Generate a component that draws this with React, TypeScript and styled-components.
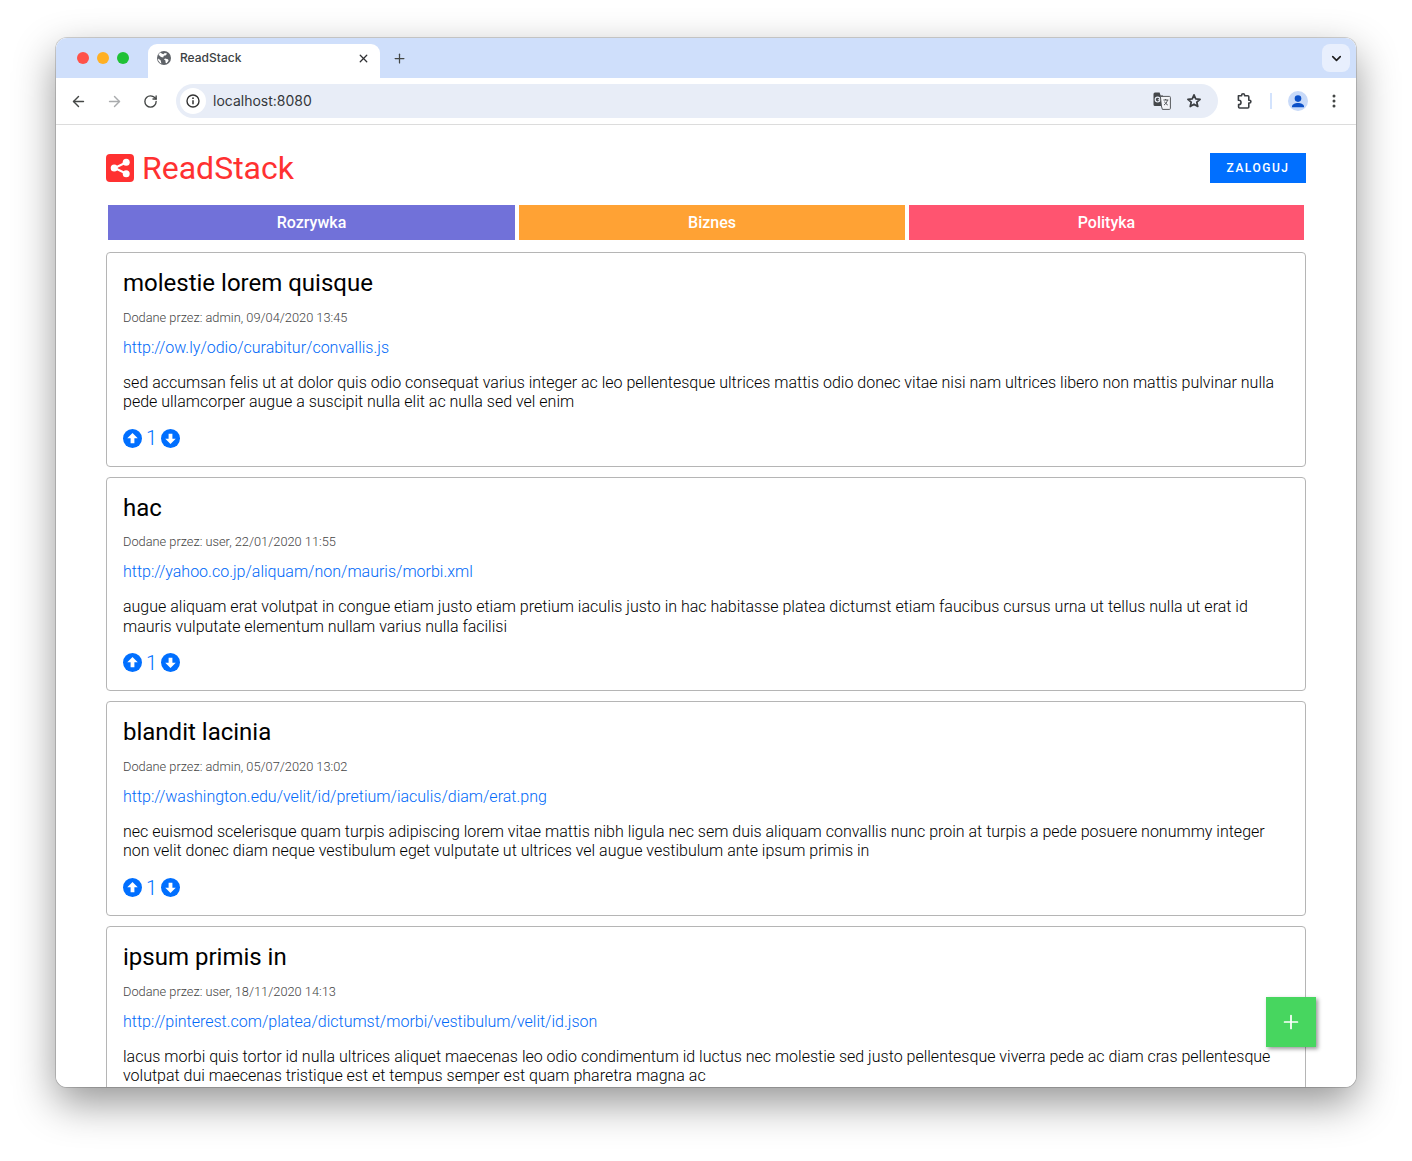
import React from 'react';
import styled, { createGlobalStyle } from 'styled-components';
import { ArrowLeft, ArrowRight, ChevronDown, Plus, RotateCw, X } from 'lucide-react';

const GlobalStyle = createGlobalStyle`
  html, body {
    margin: 0;
    padding: 0;
    background: #fff;
  }
  body {
    font-family: Roboto, "Liberation Sans", sans-serif;
  }
`;

const Page = styled.div`
  width: 1412px;
  height: 1161px;
  padding: 38px 56px 0;
  box-sizing: border-box;
  overflow: hidden;
`;

const Window = styled.div`
  position: relative;
  width: 1300px;
  height: 1049px;
  display: flex;
  flex-direction: column;
  border-radius: 11px;
  overflow: hidden;
  background: #fff;
`;

const WindowShadow = styled.div`
  border-radius: 11px;
  width: 1300px;
  height: 1049px;
  box-shadow: 0 0 0 1px rgba(0, 0, 0, 0.16), 0 16px 42px rgba(0, 0, 0, 0.42);
`;

const TabStrip = styled.div`
  height: 40px;
  flex: none;
  display: flex;
  align-items: flex-end;
  padding: 0 6px 0 92px;
  background: #cfdffb;
`;

const Lights = styled.div`
  position: absolute;
  left: 21px;
  top: 14px;
  display: flex;
  gap: 8px;
`;

const Light = styled.span<{ $color: string }>`
  width: 12px;
  height: 12px;
  border-radius: 50%;
  background: ${(p) => p.$color};
`;

const Tab = styled.div`
  width: 232px;
  height: 34px;
  box-sizing: border-box;
  display: flex;
  align-items: center;
  padding: 0 10px 6px 9px;
  background: #fff;
  border-radius: 9px 9px 0 0;
  font-family: Inter, Roboto, sans-serif;
  font-size: 12px;
  font-weight: 500;
  color: #3c3f43;
`;

const TabTitle = styled.span`
  flex: 1;
  margin-left: 9px;
  padding-bottom: 1px;
`;

const NewTab = styled.div`
  display: flex;
  align-items: center;
  height: 34px;
  padding-bottom: 6px;
  box-sizing: border-box;
  margin-left: 12px;
  color: #444746;
`;

const TabMenu = styled.div`
  margin-left: auto;
  margin-bottom: 6px;
  width: 28px;
  height: 28px;
  border-radius: 8px;
  background: #e8effd;
  display: flex;
  align-items: center;
  justify-content: center;
  color: #1f1f1f;
`;

const Toolbar = styled.div`
  height: 46px;
  flex: none;
  display: flex;
  align-items: center;
  padding: 0 12px;
  background: #fff;
  border-radius: 10px 10px 0 0;
  border-bottom: 1px solid #dcdcdc;
  color: #444746;
  position: relative;
`;

const ToolButton = styled.div<{ $muted?: boolean; $gap?: number }>`
  width: 20px;
  height: 20px;
  flex: none;
  display: flex;
  align-items: center;
  justify-content: center;
  margin-right: ${(p) => p.$gap ?? 16}px;
  color: ${(p) => (p.$muted ? '#a9abad' : '#444746')};
`;

const Omnibox = styled.div`
  width: 1042px;
  height: 34px;
  flex: none;
  margin-right: 16px;
  display: flex;
  align-items: center;
  padding: 0 16px 0 4px;
  box-sizing: border-box;
  background: #e8edf7;
  border-radius: 17px;
`;

const SiteInfo = styled.div`
  width: 26px;
  height: 26px;
  border-radius: 50%;
  background: #fff;
  display: flex;
  align-items: center;
  justify-content: center;
  color: #333;
`;

const Address = styled.span`
  flex: 1;
  margin-left: 7px;
  padding-bottom: 1px;
  font-family: Inter, Roboto, sans-serif;
  font-size: 14px;
  color: #35383b;
`;

const OmniIcon = styled.div<{ $gap?: number }>`
  display: flex;
  align-items: center;
  margin-left: ${(p) => p.$gap ?? 0}px;
  color: #444746;
`;

const Divider = styled.span`
  width: 2px;
  height: 16px;
  background: #d3e3fd;
  margin: 0 16px 0 0;
`;

const Avatar = styled.div`
  width: 20px;
  height: 20px;
  border-radius: 50%;
  background: #c8daf9;
  overflow: hidden;
  margin-right: 16px;
`;

const Content = styled.div`
  flex: 1;
  min-height: 0;
  overflow: hidden;
  padding: 28px 50px 0;
`;

const Header = styled.header`
  display: flex;
  align-items: flex-start;
  justify-content: space-between;
  height: 52px;
`;

const Brand = styled.a`
  display: flex;
  align-items: center;
  gap: 8px;
  height: 30px;
  font-size: 32px;
  color: #ff3131;
  text-decoration: none;
`;

const LoginButton = styled.button`
  width: 96px;
  height: 30px;
  border: 0;
  padding: 0;
  background: #006fff;
  color: #fff;
  font-family: inherit;
  font-size: 12px;
  font-weight: 500;
  letter-spacing: 1.5px;
`;

const CategoryNav = styled.nav`
  display: grid;
  grid-template-columns: 407px 386px 395px;
  gap: 4px;
  margin: 0 2px 12px;
`;

const CategoryLink = styled.a<{ $color: string }>`
  height: 35px;
  display: flex;
  align-items: center;
  justify-content: center;
  background: ${(p) => p.$color};
  color: #fff;
  font-size: 16px;
  font-weight: 500;
`;

const PostList = styled.div`
  display: flex;
  flex-direction: column;
  gap: 10px;
`;

const Card = styled.article`
  box-sizing: border-box;
  padding: 16px;
  border: 1px solid #b5b5b5;
  border-radius: 4px;
  color: #000;
`;

const Title = styled.h2`
  margin: 0 0 12px;
  font-size: 24px;
  line-height: 1.2;
  font-weight: 400;
`;

const Meta = styled.div`
  font-size: 12.8px;
  line-height: 1.2;
  font-weight: 300;
  color: #444;
  margin-bottom: 12.4px;
`;

const PostUrl = styled.a`
  display: block;
  font-size: 16px;
  line-height: 1.2;
  font-weight: 300;
  color: #0069f8;
  margin-bottom: 16px;
`;

const Body = styled.p`
  margin: 0 0 15.6px;
  font-size: 16px;
  line-height: 1.2;
  font-weight: 300;
`;

const Votes = styled.div`
  display: flex;
  align-items: center;
  height: 23px;
  gap: 4px;
  font-size: 20px;
  font-weight: 300;
  color: #006fff;
`;

const Fab = styled.button`
  position: absolute;
  left: 1210px;
  top: 959px;
  width: 50px;
  height: 50px;
  border: 0;
  padding: 0;
  display: flex;
  align-items: center;
  justify-content: center;
  background: #47d65f;
  color: #fff;
  box-shadow: 2px 2px 4px rgba(0, 0, 0, 0.4);
`;

const posts = [
  {
    title: 'molestie lorem quisque',
    meta: 'Dodane przez: admin, 09/04/2020 13:45',
    url: 'http://ow.ly/odio/curabitur/convallis.js',
    body: 'sed accumsan felis ut at dolor quis odio consequat varius integer ac leo pellentesque ultrices mattis odio donec vitae nisi nam ultrices libero non mattis pulvinar nulla pede ullamcorper augue a suscipit nulla elit ac nulla sed vel enim',
  },
  {
    title: 'hac',
    meta: 'Dodane przez: user, 22/01/2020 11:55',
    url: 'http://yahoo.co.jp/aliquam/non/mauris/morbi.xml',
    body: 'augue aliquam erat volutpat in congue etiam justo etiam pretium iaculis justo in hac habitasse platea dictumst etiam faucibus cursus urna ut tellus nulla ut erat id mauris vulputate elementum nullam varius nulla facilisi',
  },
  {
    title: 'blandit lacinia',
    meta: 'Dodane przez: admin, 05/07/2020 13:02',
    url: 'http://washington.edu/velit/id/pretium/iaculis/diam/erat.png',
    body: 'nec euismod scelerisque quam turpis adipiscing lorem vitae mattis nibh ligula nec sem duis aliquam convallis nunc proin at turpis a pede posuere nonummy integer non velit donec diam neque vestibulum eget vulputate ut ultrices vel augue vestibulum ante ipsum primis in',
  },
  {
    title: 'ipsum primis in',
    meta: 'Dodane przez: user, 18/11/2020 14:13',
    url: 'http://pinterest.com/platea/dictumst/morbi/vestibulum/velit/id.json',
    body: 'lacus morbi quis tortor id nulla ultrices aliquet maecenas leo odio condimentum id luctus nec molestie sed justo pellentesque viverra pede ac diam cras pellentesque volutpat dui maecenas tristique est et tempus semper est quam pharetra magna ac',
  },
];

const VoteIcon: React.FC<{ down?: boolean }> = ({ down }) => (
  <svg width="19" height="19" viewBox="0 0 20 20">
    <circle cx="10" cy="10" r="10" fill="#006fff" />
    <path
      d={down ? 'M10 15.8 4.5 10.2H8V5h4v5.2h3.5z' : 'M10 4.2 15.5 9.8H12V15H8V9.8H4.5z'}
      fill="#fff"
    />
  </svg>
);

const GlobeIcon = () => (
  <svg width="14" height="14" viewBox="0 0 14 14">
    <circle cx="7" cy="7" r="7" fill="#5f6368" />
    <path d="M3 1.6 6.2 3.2 7.8 2l2.2.4-1 1.8-2.2.6-.6 1.6-2.2-.4L2.4 4.4 1.4 4zM8 7.4l3 .8.6 1.6-2 2.4-1-.4-.2-2.2L7 8.6zM1 7.4l2.6 1.8.8 3.2-1.2-.4L1.2 9.6z" fill="#fff" />
  </svg>
);

const InfoIcon = () => (
  <svg width="14" height="14" viewBox="0 0 14 14" fill="none">
    <circle cx="7" cy="7" r="6" stroke="currentColor" strokeWidth="1.4" />
    <path d="M7 6.2V10.2" stroke="currentColor" strokeWidth="1.5" />
    <circle cx="7" cy="4.2" r="0.9" fill="currentColor" />
  </svg>
);

const TranslateIcon = () => (
  <svg width="18" height="18" viewBox="0 0 18 18" fill="none">
    <path d="M0.5 2A1.5 1.5 0 0 1 2 .5h4.6l1 3H10v10.5H2A1.5 1.5 0 0 1 .5 12.5z" fill="#44474a" />
    <circle cx="4.6" cy="7.6" r="2.4" stroke="#e8edf7" strokeWidth="1.2" />
    <path d="M4.8 7.8h2.4" stroke="#e8edf7" strokeWidth="1.1" />
    <path d="M7.4 4.4h9a1 1 0 0 1 1 1v11a1 1 0 0 1-1 1H9.4l-1-3.4z" fill="#f4f5f8" stroke="#55585b" strokeWidth="1" />
    <path d="M10.4 8h5M12.6 7v1M14.4 8c-.5 2.4-1.6 4-3.4 5M11.6 9.6c.7 1.6 1.8 2.8 3.2 3.4" stroke="#44474a" strokeWidth="0.9" />
  </svg>
);

const StarIcon = () => (
  <svg width="16" height="16" viewBox="0 0 16 16" fill="none">
    <path
      d="M8 1.9 9.75 5.9 14.1 6.3 10.8 9.2 11.8 13.5 8 11.2 4.2 13.5 5.2 9.2 1.9 6.3 6.25 5.9z"
      stroke="#3c3f43"
      strokeWidth="1.7"
      strokeLinejoin="round"
    />
  </svg>
);

const ExtensionIcon = () => (
  <svg width="18" height="18" viewBox="0 0 18 18" fill="none">
    <path
      d="M3.4 3.8H6.6V3.2a1.5 1.5 0 0 1 3 0V3.8h3.2a1 1 0 0 1 1 1v3.4h.7a1.4 1.4 0 0 1 0 2.8h-.7v4a1 1 0 0 1-1 1H4.6a1 1 0 0 1-1-1v-2.4h.2a2.2 2.2 0 0 0 0-4.4h-.4V3.8z"
      stroke="#3c3f43"
      strokeWidth="1.6"
      strokeLinejoin="round"
    />
  </svg>
);

const AvatarIcon = () => (
  <svg width="20" height="20" viewBox="0 0 20 20">
    <circle cx="10" cy="7.6" r="3.3" fill="#0b50c8" />
    <path d="M4 15.6c0-2.4 3-3.6 6-3.6s6 1.2 6 3.6v.6H4z" fill="#0b50c8" />
  </svg>
);

const MenuDots = () => (
  <svg width="16" height="16" viewBox="0 0 16 16">
    <circle cx="8" cy="3" r="1.5" fill="#444746" />
    <circle cx="8" cy="8" r="1.5" fill="#444746" />
    <circle cx="8" cy="13" r="1.5" fill="#444746" />
  </svg>
);

const ShareLogo = () => (
  <svg width="28" height="28" viewBox="0 0 28 28">
    <rect width="28" height="28" rx="4" fill="#ff3131" />
    <path d="M20 8.5 8.5 14 20 19.5" fill="none" stroke="#fff" strokeWidth="2" />
    <circle cx="20.2" cy="8.2" r="3.5" fill="#fff" />
    <circle cx="8.2" cy="14" r="3.5" fill="#fff" />
    <circle cx="20.2" cy="19.8" r="3.5" fill="#fff" />
  </svg>
);

const App: React.FC = () => (
  <Page>
    <GlobalStyle />
    <WindowShadow>
      <Window>
        <TabStrip>
          <Lights>
            <Light $color="#ff5249" />
            <Light $color="#ffb024" />
            <Light $color="#1fc135" />
          </Lights>
          <Tab>
            <GlobeIcon />
            <TabTitle>ReadStack</TabTitle>
            <X size={13} strokeWidth={2.4} color="#303134" />
          </Tab>
          <NewTab>
            <Plus size={15} strokeWidth={2} />
          </NewTab>
          <TabMenu>
            <ChevronDown size={15} strokeWidth={2.6} />
          </TabMenu>
        </TabStrip>
        <Toolbar>
          <ToolButton><ArrowLeft size={17} strokeWidth={2} /></ToolButton>
          <ToolButton $muted><ArrowRight size={17} strokeWidth={2} /></ToolButton>
          <ToolButton $gap={16}><RotateCw size={15} strokeWidth={2.2} /></ToolButton>
          <Omnibox>
            <SiteInfo><InfoIcon /></SiteInfo>
            <Address>localhost:8080</Address>
            <OmniIcon><TranslateIcon /></OmniIcon>
            <OmniIcon $gap={15}><StarIcon /></OmniIcon>
          </Omnibox>
          <ToolButton $gap={16}><ExtensionIcon /></ToolButton>
          <Divider />
          <Avatar><AvatarIcon /></Avatar>
          <ToolButton $gap={0}><MenuDots /></ToolButton>
        </Toolbar>
        <Content>
          <Header>
            <Brand>
              <ShareLogo />
              ReadStack
            </Brand>
            <LoginButton>ZALOGUJ</LoginButton>
          </Header>
          <CategoryNav>
            <CategoryLink $color="#7171d9">Rozrywka</CategoryLink>
            <CategoryLink $color="#ffa234">Biznes</CategoryLink>
            <CategoryLink $color="#ff5470">Polityka</CategoryLink>
          </CategoryNav>
          <PostList>
            {posts.map((post) => (
              <Card key={post.title}>
                <Title>{post.title}</Title>
                <Meta>{post.meta}</Meta>
                <PostUrl>{post.url}</PostUrl>
                <Body>{post.body}</Body>
                <Votes>
                  <VoteIcon />
                  1
                  <VoteIcon down />
                </Votes>
              </Card>
            ))}
          </PostList>
        </Content>
        <Fab>
          <Plus size={22} strokeWidth={1.9} />
        </Fab>
      </Window>
    </WindowShadow>
  </Page>
);

export default App;
